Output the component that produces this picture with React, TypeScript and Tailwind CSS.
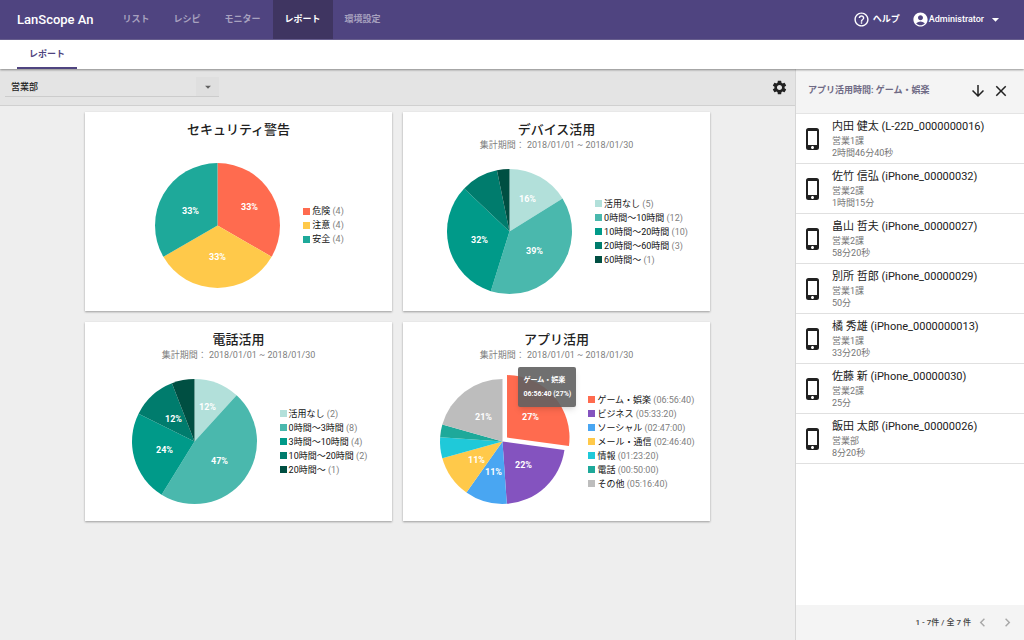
import React, { useState } from "react";
import {
  MdAccountCircle,
  MdArrowDownward,
  MdArrowDropDown,
  MdChevronLeft,
  MdChevronRight,
  MdClose,
  MdHelpOutline,
  MdPhoneIphone,
  MdSettings,
} from "react-icons/md";

type Slice = {
  label: string;
  value: number;
  note: string;
  color: string;
  percent?: string;
  // label centre, measured from the centre of the pie
  at?: [number, number];
  pulled?: boolean;
};

type Report = {
  title: string;
  period?: string;
  slices: Slice[];
  tooltip?: { name: string; text: string };
};

type Device = {
  name: string;
  group: string;
  time: string;
};

const menu = ["リスト", "レシピ", "モニター", "レポート", "環境設定"];
const period = "集計期間： 2018/01/01 ~ 2018/01/30";

const reports: Report[] = [
  {
    title: "セキュリティ警告",
    slices: [
      { label: "危険", value: 4, note: "4", color: "#ff6b4f", percent: "33%", at: [32, -19] },
      { label: "注意", value: 4, note: "4", color: "#ffc94a", percent: "33%", at: [0, 31] },
      { label: "安全", value: 4, note: "4", color: "#1ea99a", percent: "33%", at: [-27, -15] },
    ],
  },
  {
    title: "デバイス活用",
    period,
    slices: [
      { label: "活用なし", value: 5, note: "5", color: "#b2e0da", percent: "16%", at: [18, -33] },
      { label: "0時間〜10時間", value: 12, note: "12", color: "#4ab8ad", percent: "39%", at: [25, 19] },
      { label: "10時間〜20時間", value: 10, note: "10", color: "#009a89", percent: "32%", at: [-30, 8] },
      { label: "20時間〜60時間", value: 3, note: "3", color: "#007c6d" },
      { label: "60時間〜", value: 1, note: "1", color: "#004f42" },
    ],
  },
  {
    title: "電話活用",
    period,
    slices: [
      { label: "活用なし", value: 2, note: "2", color: "#b2e0da", percent: "12%", at: [13, -35] },
      { label: "0時間〜3時間", value: 8, note: "8", color: "#4ab8ad", percent: "47%", at: [25, 19] },
      { label: "3時間〜10時間", value: 4, note: "4", color: "#009a89", percent: "24%", at: [-30, 8] },
      { label: "10時間〜20時間", value: 2, note: "2", color: "#007c6d", percent: "12%", at: [-21, -23] },
      { label: "20時間〜", value: 1, note: "1", color: "#004f42" },
    ],
  },
  {
    title: "アプリ活用",
    period,
    slices: [
      { label: "ゲーム・娯楽", value: 25000, note: "06:56:40", color: "#ff6b4f", percent: "27%", at: [28, -25], pulled: true },
      { label: "ビジネス", value: 20000, note: "05:33:20", color: "#8453bf", percent: "22%", at: [21, 23] },
      { label: "ソーシャル", value: 10020, note: "02:47:00", color: "#49a6f2", percent: "11%", at: [-9, 30] },
      { label: "メール・通信", value: 10000, note: "02:46:40", color: "#ffc94a", percent: "11%", at: [-26, 18] },
      { label: "情報", value: 5000, note: "01:23:20", color: "#1fc9d9" },
      { label: "電話", value: 3000, note: "00:50:00", color: "#1ea99a" },
      { label: "その他", value: 19000, note: "05:16:40", color: "#bdbdbd", percent: "21%", at: [-19, -25] },
    ],
    tooltip: { name: "ゲーム・娯楽", text: "06:56:40 (27%)" },
  },
];

const devices: Device[] = [
  { name: "内田 健太 (L-22D_0000000016)", group: "営業1課", time: "2時間46分40秒" },
  { name: "佐竹 信弘 (iPhone_00000032)", group: "営業2課", time: "1時間15分" },
  { name: "畠山 哲夫 (iPhone_00000027)", group: "営業2課", time: "58分20秒" },
  { name: "別所 哲郎 (iPhone_00000029)", group: "営業1課", time: "50分" },
  { name: "橘 秀雄 (iPhone_0000000013)", group: "営業1課", time: "33分20秒" },
  { name: "佐藤 新 (iPhone_00000030)", group: "営業2課", time: "25分" },
  { name: "飯田 太郎 (iPhone_00000026)", group: "営業部", time: "8分20秒" },
];

const R = 62.5;

const PieChart: React.FC<{ slices: Slice[]; title: string }> = ({ slices, title }) => {
  const total = slices.reduce((sum, s) => sum + s.value, 0);
  let start = 0;

  const paths = slices.map((s) => {
    const end = start + (s.value / total) * Math.PI * 2;
    const mid = (start + end) / 2;
    // the selected slice moves 6px away from the centre
    const cx = s.pulled ? Math.sin(mid) * 6 : 0;
    const cy = s.pulled ? -Math.cos(mid) * 6 : 0;
    const x1 = cx + Math.sin(start) * R;
    const y1 = cy - Math.cos(start) * R;
    const x2 = cx + Math.sin(end) * R;
    const y2 = cy - Math.cos(end) * R;
    const large = end - start > Math.PI ? 1 : 0;
    start = end;
    return `M${cx} ${cy}L${x1} ${y1}A${R} ${R} 0 ${large} 1 ${x2} ${y2}Z`;
  });

  return (
    <svg
      role="img"
      aria-label={title}
      viewBox="-62.5 -62.5 125 125"
      className="block size-[125px] overflow-visible"
    >
      {slices.map((s, i) => (
        <path key={s.label} d={paths[i]} fill={s.color} />
      ))}
      {slices.map((s) =>
        s.percent && s.at ? (
          <text
            key={s.label}
            x={s.at[0]}
            y={s.at[1] + 3}
            textAnchor="middle"
            className="fill-white text-[9px] font-bold"
          >
            {s.percent}
          </text>
        ) : null
      )}
    </svg>
  );
};

const ReportCard: React.FC<{ report: Report }> = ({ report }) => {
  return (
    <section className="flex h-[199px] w-[307px] flex-col bg-white pt-[9px] shadow-[0_1px_2px_rgba(0,0,0,0.35)]">
      <h2 className="text-center text-[13px] leading-[18px] font-medium text-[#212121]">{report.title}</h2>
      {report.period && (
        <p className="text-center text-[9px] leading-[13px] text-[#808080]">{report.period}</p>
      )}
      <div className="flex flex-1 items-center justify-center gap-[23px] pl-[22px]">
        <div className="relative">
          <PieChart slices={report.slices} title={report.title} />
          {report.tooltip && (
            <div
              role="tooltip"
              className="absolute -top-3 left-[78px] rounded-xs bg-[#616161]/90 px-[5px] py-[6px] text-[7px] leading-[14px] font-bold whitespace-nowrap text-white shadow-md"
            >
              <p>{report.tooltip.name}</p>
              <p>{report.tooltip.text}</p>
            </div>
          )}
        </div>
        <ul className="text-[9px] leading-[14px] whitespace-nowrap text-[#111111]">
          {report.slices.map((s) => (
            <li key={s.label} className="flex items-center gap-[2px]">
              <span className="size-[7px]" style={{ backgroundColor: s.color }}></span>
              <span>
                {s.label} <span className="text-[#808080]">({s.note})</span>
              </span>
            </li>
          ))}
        </ul>
      </div>
    </section>
  );
};

const Header: React.FC = () => {
  return (
    <header className="flex h-10 items-stretch border-b border-[#6a6191] bg-[#4f4480] text-[9px] font-bold text-white">
      <h1 className="flex items-center pr-[17px] pl-[17px] text-[13px] font-medium">LanScope An</h1>
      <nav className="flex">
        {menu.map((item) => (
          <a
            key={item}
            href="#"
            className={`flex items-center px-3 ${item === "レポート" ? "bg-[#3f3561] text-white" : "text-[#a7a1bf]"}`}
          >
            {item}
          </a>
        ))}
      </nav>
      <div className="ml-auto flex items-center pr-5">
        <a href="#" className="mr-3 flex items-center gap-[3px]">
          <MdHelpOutline className="size-[17px]" />
          ヘルプ
        </a>
        <button type="button" className="flex items-center font-medium">
          <MdAccountCircle className="size-[17px]" />
          Administrator
          <MdArrowDropDown className="ml-[3px] size-[17px]" />
        </button>
      </div>
    </header>
  );
};

const DevicePanel: React.FC = () => {
  return (
    <aside className="z-10 flex w-[229px] shrink-0 flex-col border-l border-[#d6d6d6] bg-white">
      <div className="flex h-[45px] items-center border-b border-[#e4e4e4] bg-[#f4f4f4] pr-[14px] pl-3 text-[#212121]">
        <h2 className="flex-1 text-[9px] font-bold text-[#6f6a85]">アプリ活用時間: ゲーム・娯楽</h2>
        <button type="button" aria-label="ダウンロード" className="mr-[5px]">
          <MdArrowDownward className="size-[18px]" />
        </button>
        <button type="button" aria-label="閉じる">
          <MdClose className="size-[18px]" />
        </button>
      </div>
      <ul className="flex-1">
        {devices.map((d) => (
          <li key={d.name} className="flex h-[50px] items-center gap-[7px] border-b border-[#e0e0e0] pl-[5px]">
            <MdPhoneIphone className="size-6 shrink-0 text-[#212121]" />
            <div className="text-[9px] leading-3 text-[#757575]">
              <p className="text-[11px] leading-4 text-[#212121]">{d.name}</p>
              <p>{d.group}</p>
              <p>{d.time}</p>
            </div>
          </li>
        ))}
      </ul>
      <div className="flex h-[35px] items-center justify-end bg-[#f4f4f4] pr-2 text-[8px] font-medium text-[#424242]">
        <span className="mr-[3px]">1 - 7件 / 全 7 件</span>
        <button type="button" aria-label="前へ" className="mr-2 text-[#a8a8a8]">
          <MdChevronLeft className="size-[17px]" />
        </button>
        <button type="button" aria-label="次へ" className="text-[#a8a8a8]">
          <MdChevronRight className="size-[17px]" />
        </button>
      </div>
    </aside>
  );
};

const App: React.FC = () => {
  const [group, setGroup] = useState("営業部");

  return (
    <div className="flex min-h-screen flex-col bg-[#eeeeee] font-[Roboto,'Noto_Sans_CJK_JP',sans-serif]">
      <Header />
      <div className="z-20 flex h-[29px] bg-white pl-[17px] shadow-[0_1px_2px_rgba(0,0,0,0.4)]">
        <a
          href="#"
          className="flex items-center border-b-2 border-[#4f4480] px-3 pt-[2px] text-[9px] font-bold text-[#4f4480]"
        >
          レポート
        </a>
      </div>

      <div className="flex flex-1">
        <main className="min-w-0 flex-1">
          <div className="flex h-[37px] items-center justify-between border-b border-[#d0d0d0] bg-[#e4e4e4] pr-[7px] pl-[5px]">
            <div className="relative flex h-5 w-[214px] border-b border-[#cccccc]">
              <select
                aria-label="グループ"
                value={group}
                onChange={(e) => setGroup(e.target.value)}
                className="w-full appearance-none pt-[2px] pl-[6px] text-[9px] font-medium text-[#212121] outline-none"
              >
                <option value="営業部">営業部</option>
              </select>
              <span className="pointer-events-none absolute inset-y-0 right-0 flex w-[23px] items-center justify-center bg-[#dfdfdf] text-[#616161]">
                <MdArrowDropDown className="size-[14px]" />
              </span>
            </div>
            <button type="button" aria-label="設定" className="text-[#212121]">
              <MdSettings className="size-[17px]" />
            </button>
          </div>

          <div className="flex flex-wrap justify-center gap-[11px] px-5 py-[6px]">
            {reports.map((r) => (
              <ReportCard key={r.title} report={r} />
            ))}
          </div>
        </main>
        <DevicePanel />
      </div>
    </div>
  );
};

export default App;
